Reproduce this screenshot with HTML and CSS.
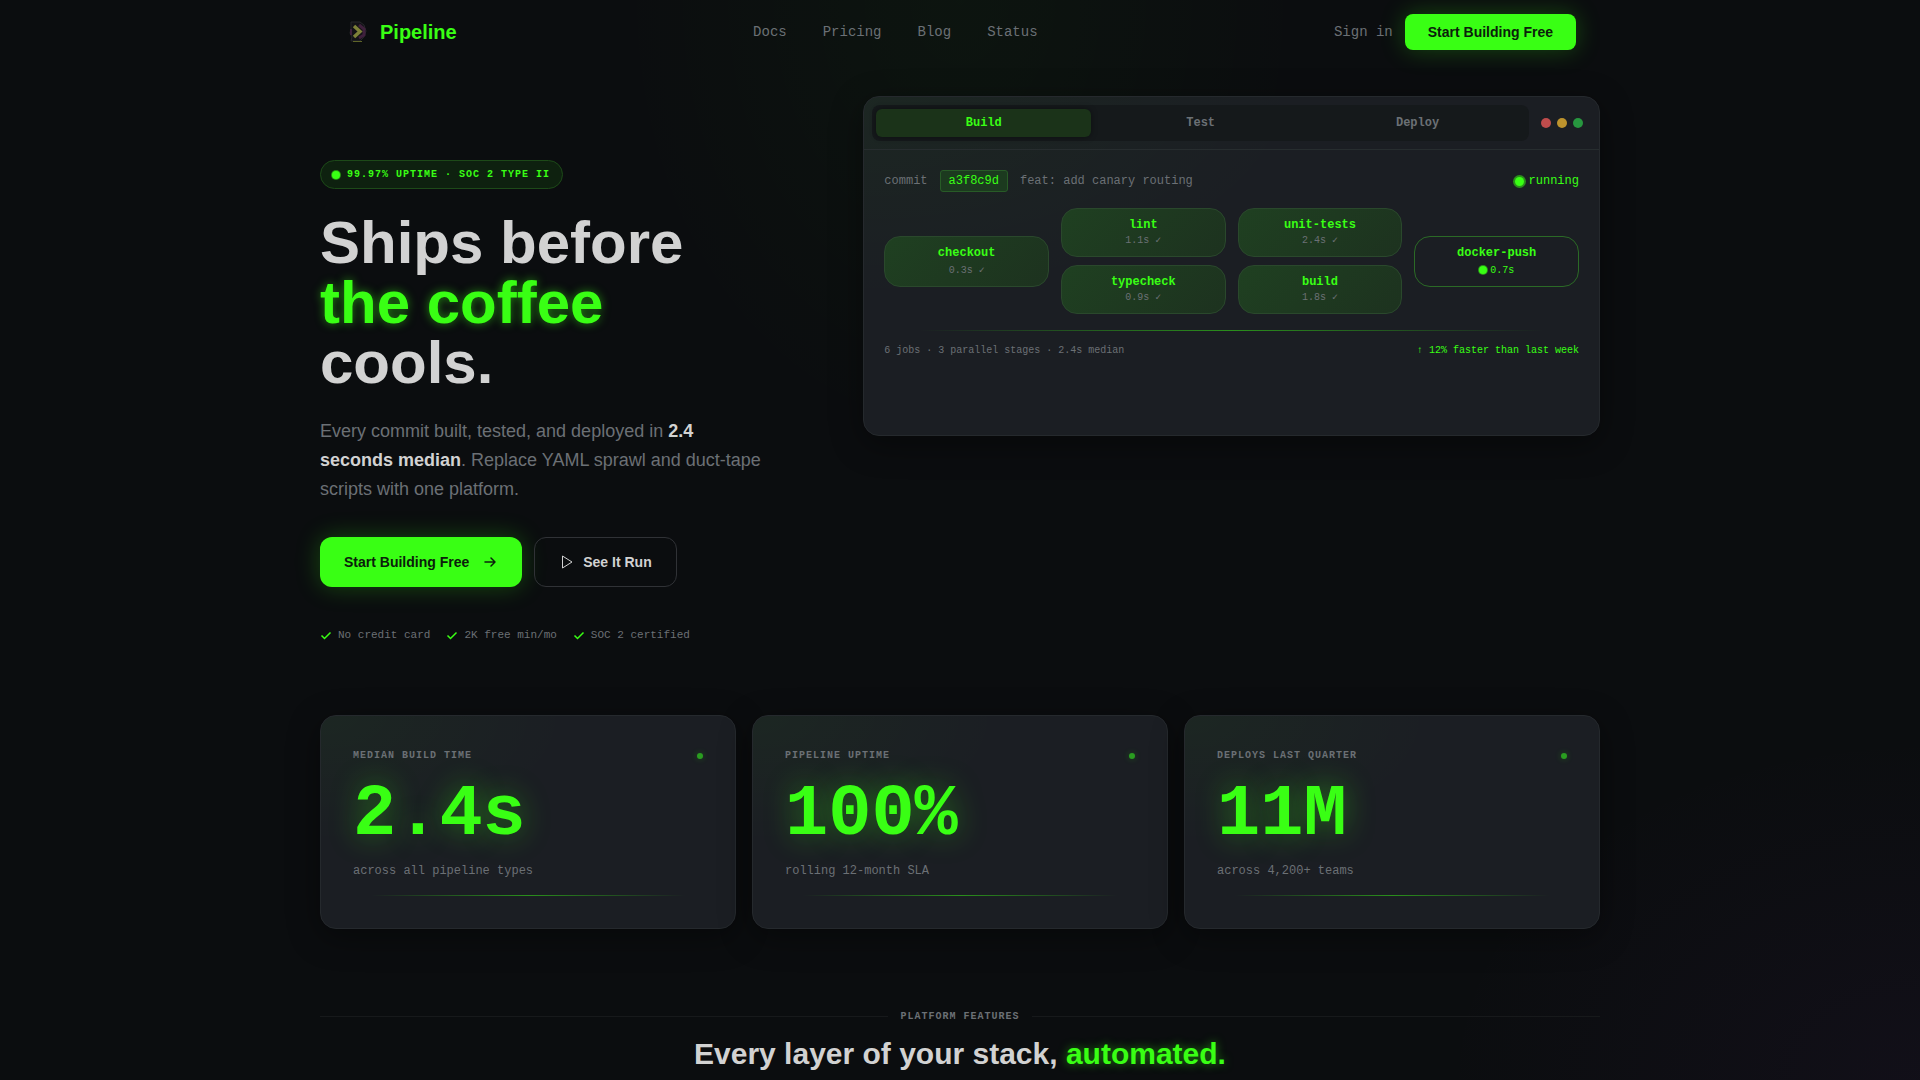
FILE: index.html
```
<!DOCTYPE html>
<html lang="en">
<head>
    <meta charset="UTF-8">
    <meta name="viewport" content="width=device-width, initial-scale=1.0">
    <title>Pipeline</title>
    <link rel="stylesheet" href="styles.css">
</head>
<body>
    <header class="nav">
        <a class="logo" href="#">
            <svg width="28" height="28" viewBox="0 0 28 28" fill="none" aria-hidden="true">
                <path d="M7 4h9l4 3 2 6-2 6-4 4H7l1-4-2-4 1-4z" fill="#131217" stroke="#26262a"/>
                <path d="M15 7l5 4v6l-5 3" stroke="#3f203c" stroke-width="3"/>
                <path d="M7 11v6" stroke="#3f203c" stroke-width="2"/>
                <path d="M10 8l6 5.500-6 5.500" stroke="#7d8038" stroke-width="3.500"/>
                <path d="M9 23.500h9" stroke="#5f6428"/>
            </svg>
            Pipeline
        </a>
        <nav class="nav-links">
            <a href="#">Docs</a>
            <a href="#">Pricing</a>
            <a href="#">Blog</a>
            <a href="#">Status</a>
        </nav>
        <div class="nav-actions">
            <a href="#">Sign in</a>
            <button class="btn btn-primary btn-small">Start Building Free</button>
        </div>
    </header>

    <main>
        <section class="hero">
            <div class="hero-copy">
                <div class="badge"><span class="pulse"></span>99.97% UPTIME · SOC 2 TYPE II</div>
                <h1>Ships before<br><span class="glow">the coffee</span><br>cools.</h1>
                <p class="lead">Every commit built, tested, and deployed in <strong>2.4 seconds median</strong>. Replace YAML sprawl and duct-tape scripts with one platform.</p>
                <div class="hero-buttons">
                    <button class="btn btn-primary btn-arrow">
                        Start Building Free
                        <svg width="16" height="16" viewBox="0 0 16 16" fill="none" stroke="currentColor" stroke-width="1.500" stroke-linecap="round" stroke-linejoin="round" aria-hidden="true"><path d="M3 8h10M9 4l4 4-4 4"/></svg>
                    </button>
                    <button class="btn btn-outline">
                        <svg width="16" height="16" viewBox="0 0 16 16" fill="none" stroke="currentColor" stroke-linejoin="round" aria-hidden="true"><path d="M3.500 2v12l9.500-6z"/></svg>
                        See It Run
                    </button>
                </div>
                <ul class="checks">
                    <li><svg width="12" height="12" viewBox="0 0 12 12" aria-hidden="true"><path d="M1.500 6.500l3 3 6-6"/></svg>No credit card</li>
                    <li><svg width="12" height="12" viewBox="0 0 12 12" aria-hidden="true"><path d="M1.500 6.500l3 3 6-6"/></svg>2K free min/mo</li>
                    <li><svg width="12" height="12" viewBox="0 0 12 12" aria-hidden="true"><path d="M1.500 6.500l3 3 6-6"/></svg>SOC 2 certified</li>
                </ul>
            </div>

            <div class="panel">
                <div class="panel-header">
                    <div class="tabs" role="tablist">
                        <button class="tab active" role="tab" aria-selected="true">Build</button>
                        <button class="tab" role="tab" aria-selected="false">Test</button>
                        <button class="tab" role="tab" aria-selected="false">Deploy</button>
                    </div>
                    <div class="window-dots">
                        <span class="dot-red"></span>
                        <span class="dot-yellow"></span>
                        <span class="dot-green"></span>
                    </div>
                </div>
                <div class="panel-body">
                    <div class="commit-row">
                        <span>commit</span>
                        <code class="hash">a3f8c9d</code>
                        <span>feat: add canary routing</span>
                        <span class="running"><span class="pulse pulse-large"></span>running</span>
                    </div>
                    <div class="stages">
                        <div class="stage">
                            <div class="job job-single">
                                <span class="job-name">checkout</span>
                                <span class="job-time">0.3s ✓</span>
                            </div>
                        </div>
                        <div class="stage">
                            <div class="job">
                                <span class="job-name">lint</span>
                                <span class="job-time">1.1s ✓</span>
                            </div>
                            <div class="job">
                                <span class="job-name">typecheck</span>
                                <span class="job-time">0.9s ✓</span>
                            </div>
                        </div>
                        <div class="stage">
                            <div class="job">
                                <span class="job-name">unit-tests</span>
                                <span class="job-time">2.4s ✓</span>
                            </div>
                            <div class="job">
                                <span class="job-name">build</span>
                                <span class="job-time">1.8s ✓</span>
                            </div>
                        </div>
                        <div class="stage">
                            <div class="job job-single job-active">
                                <span class="job-name">docker-push</span>
                                <span class="job-time"><span class="pulse"></span>0.7s</span>
                            </div>
                        </div>
                    </div>
                    <div class="beam"></div>
                    <div class="panel-footer">
                        <span>6 jobs · 3 parallel stages · 2.4s median</span>
                        <span class="faster">↑ 12% faster than last week</span>
                    </div>
                </div>
            </div>
        </section>

        <section class="stats">
            <div class="stat">
                <div class="stat-top"><span class="label">MEDIAN BUILD TIME</span><span class="stat-dot"></span></div>
                <div class="stat-value">2.4s</div>
                <div class="stat-note">across all pipeline types</div>
                <div class="beam"></div>
            </div>
            <div class="stat">
                <div class="stat-top"><span class="label">PIPELINE UPTIME</span><span class="stat-dot"></span></div>
                <div class="stat-value">100%</div>
                <div class="stat-note">rolling 12-month SLA</div>
                <div class="beam"></div>
            </div>
            <div class="stat">
                <div class="stat-top"><span class="label">DEPLOYS LAST QUARTER</span><span class="stat-dot"></span></div>
                <div class="stat-value">11M</div>
                <div class="stat-note">across 4,200+ teams</div>
                <div class="beam"></div>
            </div>
        </section>

        <section class="features">
            <div class="divider"><span class="label">PLATFORM FEATURES</span></div>
            <h2>Every layer of your stack, <span class="glow">automated.</span></h2>
        </section>
    </main>
</body>
</html>
```
FILE: styles.css
```
:root {
    --green: #39ff14;
    --text: #d2d2d2;
    --muted: #6b7075;
    --mono: "Liberation Mono", monospace;
}

*, *::before, *::after {
    box-sizing: border-box;
}

body {
    margin: 0;
    min-height: 100vh;
    font-family: "Liberation Sans", Arial, sans-serif;
    color: var(--text);
    background:
        radial-gradient(ellipse 18% 42% at 50% 0, rgba(57, 255, 20, 0.03), transparent),
        radial-gradient(ellipse 25% 32% at 100% 100%, rgba(140, 60, 200, 0.05), transparent),
        #0b0d0f;
}

a {
    color: inherit;
    text-decoration: none;
}

/* Navigation */
.nav {
    display: flex;
    align-items: center;
    justify-content: space-between;
    max-width: 1280px;
    height: 64px;
    margin: 0 auto;
    padding: 0 24px;
}
.logo {
    display: flex;
    align-items: center;
    gap: 8px;
    font-size: 20px;
    font-weight: bold;
    color: var(--green);
}
.nav-links {
    display: flex;
    gap: 36px;
    font: 14px var(--mono);
    color: var(--muted);
}
.nav-actions {
    display: flex;
    align-items: center;
    gap: 12px;
    font: 14px var(--mono);
    color: var(--muted);
}

/* Buttons */
.btn {
    display: flex;
    align-items: center;
    justify-content: center;
    gap: 8px;
    height: 50px;
    padding: 0 24px;
    border: none;
    border-radius: 12px;
    font: bold 14px "Liberation Sans", Arial, sans-serif;
    cursor: pointer;
}
.btn-primary {
    background: var(--green);
    color: #0b200b;
    box-shadow: 0 0 24px rgba(57, 255, 20, 0.25);
}
.btn-arrow {
    gap: 13px;
}
.btn-outline {
    background: transparent;
    border: 1px solid #303236;
    color: var(--text);
}
.btn-small {
    height: 36px;
    padding: 0 23px;
    border-radius: 8px;
}

/* Hero */
main {
    max-width: 1280px;
    margin: 0 auto;
}
.hero {
    display: grid;
    grid-template-columns: repeat(12, 1fr);
    gap: 24px;
    align-items: start;
    padding: 32px 0 72px;
}
.hero-copy {
    grid-column: span 5;
    padding-top: 64px;
}
.badge {
    display: inline-flex;
    align-items: center;
    gap: 7px;
    height: 29px;
    padding: 0 12px 0 11px;
    border: 1px solid #1d4a18;
    border-radius: 15px;
    background: #0e210f;
    font: bold 10px var(--mono);
    letter-spacing: 1px;
    color: var(--green);
}
.pulse {
    width: 8px;
    height: 8px;
    border-radius: 50%;
    background: var(--green);
    box-shadow: 0 0 0 1px rgba(57, 255, 20, 0.5);
}
.pulse-large {
    width: 9px;
    height: 9px;
    box-shadow: 0 0 0 2px rgba(57, 255, 20, 0.5);
}
.glow {
    color: var(--green);
    text-shadow: 0 0 10px rgba(57, 255, 20, 0.5);
}
h1 {
    margin: 24px 0;
    font-size: 60px;
    line-height: 60px;
}
.lead {
    max-width: 448px;
    margin: 0 0 33px;
    font-size: 18px;
    line-height: 29px;
    color: var(--muted);
}
.lead strong {
    color: var(--text);
}
.hero-buttons {
    display: flex;
    gap: 12px;
}
.checks {
    display: flex;
    gap: 16px;
    margin: 40px 0 0;
    padding: 0;
    list-style: none;
    font: 11px/16px var(--mono);
    color: var(--muted);
}
.checks li {
    display: flex;
    align-items: center;
    gap: 6px;
}
.checks path {
    fill: none;
    stroke: var(--green);
    stroke-width: 1.5;
}

/* Pipeline panel */
.panel,
.stat {
    border: 1px solid #25292d;
    border-radius: 16px;
    background:
        radial-gradient(ellipse 60% 60% at 0 0, rgba(57, 255, 20, 0.04), transparent),
        #1b1e23;
    box-shadow: 0 8px 32px rgba(0, 0, 0, 0.4);
}
.panel {
    grid-column: span 7;
    min-height: 340px;
    font-family: var(--mono);
    color: var(--muted);
}
.panel-header {
    display: flex;
    align-items: center;
    gap: 12px;
    padding: 8px 16px 8px 8px;
    border-bottom: 1px solid #272d2f;
}
.tabs {
    flex: 1;
    display: flex;
    gap: 2px;
    padding: 4px;
    border-radius: 8px;
    background: #15191b;
}
.tab {
    flex: 1;
    height: 28px;
    padding: 0;
    border: none;
    border-radius: 6px;
    background: transparent;
    font: bold 12px var(--mono);
    color: var(--muted);
    cursor: pointer;
}
.tab.active {
    background: #1b3319;
    color: var(--green);
    box-shadow: 0 0 6px rgba(0, 0, 0, 0.4);
}
.window-dots {
    display: flex;
    gap: 6px;
}
.window-dots span {
    width: 10px;
    height: 10px;
    border-radius: 50%;
}
.dot-red {
    background: #bf4c4c;
}
.dot-yellow {
    background: #bd932d;
}
.dot-green {
    background: #27973f;
}
.panel-body {
    padding: 20px;
}
.commit-row {
    display: flex;
    align-items: center;
    gap: 12px;
    font-size: 12px;
}
.hash {
    padding: 0 8px;
    border: 1px solid #285b27;
    border-radius: 3px;
    background: #1c3a1f;
    font: 12px/20px var(--mono);
    color: var(--green);
}
.running {
    display: flex;
    align-items: center;
    gap: 5px;
    margin-left: auto;
    color: var(--green);
}
.stages {
    display: grid;
    grid-template-columns: repeat(4, 1fr);
    gap: 12px;
    align-items: center;
    margin: 16px 0;
}
.stage {
    display: grid;
    gap: 8px;
}
.job {
    display: flex;
    flex-direction: column;
    align-items: center;
    padding: 8px;
    border: 1px solid #2a482c;
    border-radius: 16px;
    background: linear-gradient(135deg, #1f4021, #1d321f);
}
.job-single {
    gap: 2px;
}
.job-name {
    font-size: 12px;
    font-weight: bold;
    line-height: 16px;
    color: var(--green);
}
.job-time {
    display: flex;
    align-items: center;
    gap: 3px;
    font-size: 10px;
    line-height: 15px;
}
.job-active {
    border-color: #2b6a26;
    background: transparent;
}
.job-active .job-time {
    color: var(--green);
}
.beam {
    height: 1px;
    background: linear-gradient(90deg, transparent 5%, rgba(57, 255, 20, 0.5), transparent 95%);
}
.panel-footer {
    display: flex;
    justify-content: space-between;
    margin-top: 12px;
    font-size: 10px;
    line-height: 15px;
}
.faster {
    color: var(--green);
}

/* Stats */
.stats {
    display: grid;
    grid-template-columns: repeat(3, 1fr);
    gap: 16px;
}
.stat {
    padding: 32px;
    font-family: var(--mono);
}
.stat-top {
    display: flex;
    align-items: center;
    justify-content: space-between;
}
.label {
    font: bold 10px/15px var(--mono);
    letter-spacing: 1px;
    color: var(--muted);
}
.stat-dot {
    width: 6px;
    height: 6px;
    border-radius: 50%;
    background: #2a9d20;
    box-shadow: 0 0 6px rgba(57, 255, 20, 0.25);
}
.stat-value {
    margin: 16px 0 12px;
    font-size: 72px;
    font-weight: bold;
    line-height: 72px;
    color: var(--green);
    text-shadow: 0 0 30px rgba(57, 255, 20, 0.4);
}
.stat-note {
    margin-bottom: 16px;
    font-size: 12px;
    line-height: 16px;
    color: var(--muted);
}

/* Features */
.features {
    padding-top: 80px;
    text-align: center;
}
.divider {
    display: flex;
    align-items: center;
    gap: 12px;
}
.divider::before,
.divider::after {
    content: "";
    flex: 1;
    height: 1px;
    background: #17191b;
}
h2 {
    margin: 12px 0 0;
    font-size: 30px;
    line-height: 36px;
}
```
